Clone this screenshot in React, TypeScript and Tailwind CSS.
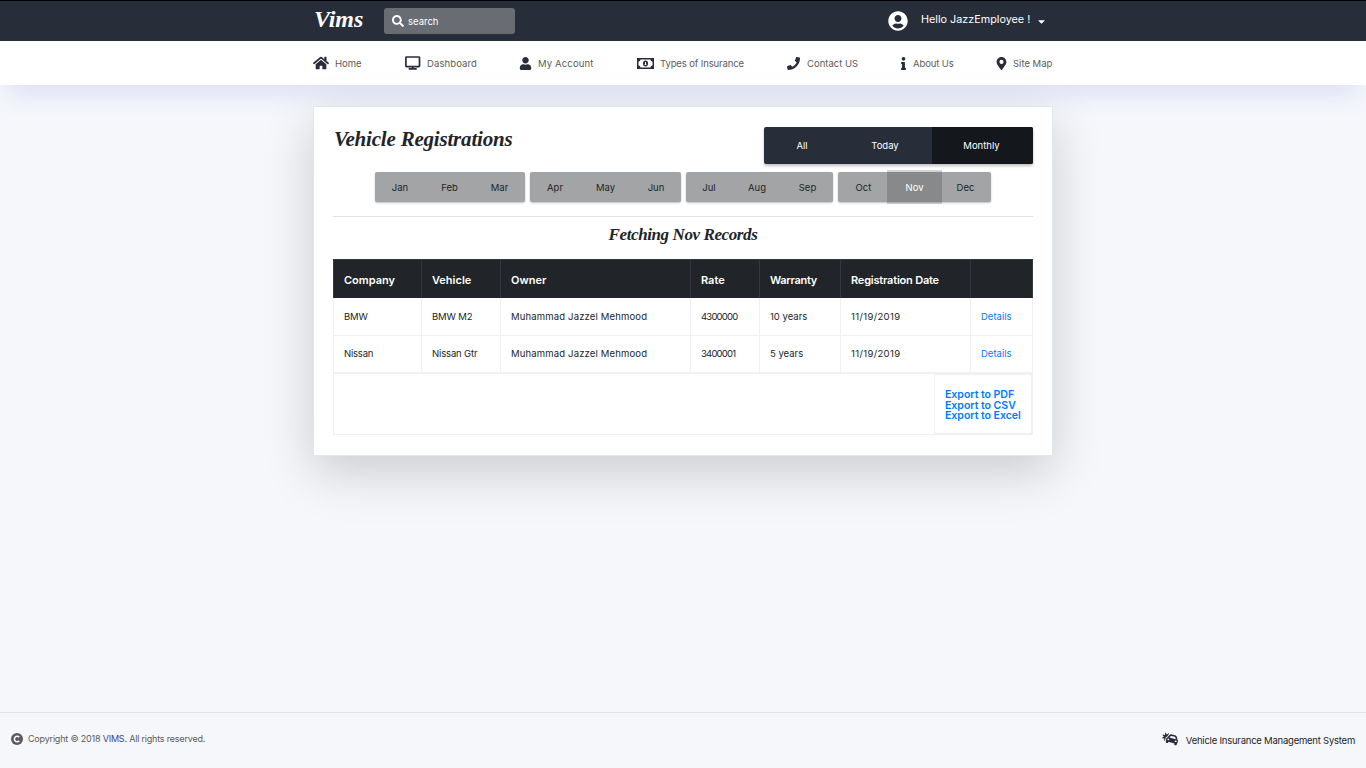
import React from "react";
import { FaHome, FaUser, FaPhone, FaInfo, FaMapMarkerAlt, FaUserCircle, FaSearch, FaCaretDown, FaCarCrash } from "react-icons/fa";

const Monitor = () => (
  <svg viewBox="0 0 16 14" className="w-4 h-3.5 shrink-0" fill="none" stroke="#282d3a" strokeWidth="1.7">
    <rect x="0.9" y="1" width="13.6" height="9.6" rx="0.6" />
    <path d="M7.7 10v2M3.7 12.9h8" />
  </svg>
);
const Money = () => (
  <svg viewBox="0 0 17 11" className="w-[17px] h-[11px] shrink-0">
    <path d="M0 0h17v11H0z" fill="#282d3a" />
    <path d="M3.5 1.5h10q0 2 2 2v4q-2 0-2 2h-10q0-2-2-2v-4q2 0 2-2z" fill="#fff" />
    <ellipse cx="8.5" cy="5.5" rx="2.5" ry="3" fill="#282d3a" />
    <path d="M8 4h1v2.5h.6v.6H7.4v-.6H8z" fill="#fff" />
  </svg>
);

type Item = { label: string; icon: React.ReactNode; cls: string; text: string };
const nav: Item[] = [
  { label: "Home", icon: <FaHome size={16} />, cls: "w-[92px] gap-[6px]", text: "" },
  { label: "Dashboard", icon: <Monitor />, cls: "w-[114px] gap-[6px]", text: "tracking-[0.1px]" },
  { label: "My Account", icon: <FaUser size={13} />, cls: "w-[118px] gap-[6px]", text: "tracking-[0.15px]" },
  { label: "Types of Insurance", icon: <Money />, cls: "w-[150px] gap-[6px]", text: "tracking-[-0.12px]" },
  { label: "Contact US", icon: <FaPhone size={13} />, cls: "w-[110px] gap-[7px]", text: "" },
  { label: "About Us", icon: <FaInfo size={13} />, cls: "w-[98px] gap-[3px]", text: "tracking-[-0.1px]" },
  { label: "Site Map", icon: <FaMapMarkerAlt size={13} />, cls: "gap-[5px]", text: "" },
];

const months: [string, string][][] = [
  [["Jan", "w-[50px]"], ["Feb", "w-[49px]"], ["Mar", "w-[51px]"]],
  [["Apr", "w-[50px]"], ["May", "w-[51px]"], ["Jun", "w-[50px]"]],
  [["Jul", "w-[46px]"], ["Aug", "w-[50px]"], ["Sep", "w-[51px]"]],
  [["Oct", "w-[51px]"], ["Nov", "w-[51px]"], ["Dec", "w-[51px]"]],
];
const heads = ["Company", "Vehicle", "Owner", "Rate", "Warranty", "Registration Date", ""];
const rows = [
  ["BMW", "BMW M2", "Muhammad Jazzel Mehmood", "4300000", "10 years", "11/19/2019", "Details"],
  ["Nissan", "Nissan Gtr", "Muhammad Jazzel Mehmood", "3400001", "5 years", "11/19/2019", "Details"],
];
const tracking = ["tracking-[-0.2px]", "tracking-[-0.15px]", "tracking-[0.16px]", "tracking-[-0.8px]", "", "tracking-[0.35px]", ""];
const cols = "grid grid-cols-[88px_79px_190px_69px_81px_130px_62px]";

export default function App() {
  return (
    <div className="h-[768px] w-full flex flex-col bg-[#f5f7fb] font-['Inter',sans-serif] text-[9.5px] text-[#212529] overflow-hidden">
      <header className="h-[41px] shrink-0 bg-[#282d3a] border-t border-black text-white">
        <div className="w-[738px] mx-auto h-full flex items-center">
          <span className="w-[70px] pb-1 font-['Liberation_Serif',serif] italic font-bold text-[24px] leading-6">Vims</span>
          <div className="w-[131px] h-[26px] rounded-[3px] bg-[#696d73] flex items-center gap-1 pl-2">
            <FaSearch size={12} />
            <span className="pt-0.5">search</span>
          </div>
          <div className="ml-auto pr-[5px] flex items-center">
            <FaUserCircle size={20} />
            <span className="ml-[13px] mr-[6px] w-[109px] pb-px text-[10.8px] whitespace-nowrap">Hello JazzEmployee !</span>
            <FaCaretDown size={11} />
          </div>
        </div>
      </header>
      <nav className="h-11 shrink-0 bg-white shadow-[0_16px_24px_-8px_rgba(120,115,220,0.2)]">
        <div className="w-[740px] mx-auto h-full flex items-center text-[#282d3a]">
          {nav.map((n) => (
            <a key={n.label} className={"flex items-center whitespace-nowrap shrink-0 " + n.cls}>
              {n.icon}
              <span className={"pt-0.5 text-[#5b5b5b] " + n.text}>{n.label}</span>
            </a>
          ))}
        </div>
      </nav>
      <main className="flex-1 pt-[21px]">
        <section className="w-[740px] h-[350px] mx-auto bg-white border border-[#e4e7ea] shadow-[0_16px_48px_rgba(0,0,0,0.175)] px-[19px] pt-5">
          <div className="flex justify-between h-[45px]">
            <h1 className="pl-px font-['Liberation_Serif',serif] italic font-bold text-[21px] leading-6 tracking-[-0.2px]">Vehicle Registrations</h1>
            <div className="flex h-[37px] rounded-[2px] overflow-hidden text-white bg-[#282d3a] shadow-[0_2px_3px_rgba(0,0,0,0.25)]">
              <span className="w-[76px] pt-0.5 grid place-items-center">All</span>
              <span className="w-[92px] pt-0.5 pr-0.5 grid place-items-center">Today</span>
              <span className="w-[101px] pt-0.5 pr-0.5 grid place-items-center bg-[#14171c]">Monthly</span>
            </div>
          </div>
          <div className="flex justify-center gap-[5px] h-[30px]">
            {months.map((g, i) => (
              <div key={i} className="flex rounded-[2px] bg-[#a2a4a5] shadow-[0_1px_2px_rgba(0,0,0,0.25)]">
                {g.map(([m, w]) => (
                  <span key={m} className={"pt-0.5 grid place-items-center " + w + (m === "Nov" ? " bg-[#88898a] text-white shadow-[0_0_0_2px_rgba(0,0,0,0.16)]" : "")}>{m}</span>
                ))}
              </div>
            ))}
          </div>
          <hr className="mt-3.5 border-[#e2e3e5]" />
          <h2 className="h-[42px] pt-1.5 text-center font-['Liberation_Serif',serif] italic font-bold text-[17px] leading-6 tracking-[-0.4px]">Fetching Nov Records</h2>
          <div className="w-[700px]">
            <div className={cols + " h-[39px] bg-[#212529] border-t border-l border-[#32383e] text-white text-[11px] font-semibold"}>
              {heads.map((h, i) => (
                <span key={i} className={"flex items-center pl-2.5 pt-[3px] border-r border-[#32383e] whitespace-nowrap " + (i === 5 ? "tracking-[-0.2px]" : i === 4 ? "tracking-[-0.3px]" : "")}>{h}</span>
              ))}
            </div>
            {rows.map((r, y) => (
              <div key={y} className={cols + " border-l border-[#f1f1f2] " + (y === 0 ? "h-[38px]" : "h-[37px]")}>
                {r.map((c, i) => (
                  <span key={i} className={"flex items-center pl-2.5 pt-px border-r border-b border-[#f1f1f2] whitespace-nowrap " + tracking[i] + (i === 6 ? " text-[#007bff]" : "")}>{c}</span>
                ))}
              </div>
            ))}
            <div className="h-[62px] border border-[#f1f1f2] flex justify-end">
              <div className="w-[98px] border border-[#f1f1f2] pl-2.5 pt-[15px] text-[#007bff] font-semibold text-[10.6px] leading-[10.5px] tracking-[-0.05px] whitespace-nowrap">
                <div>Export to PDF</div>
                <div>Export to CSV</div>
                <div>Export to Excel</div>
              </div>
            </div>
          </div>
        </section>
      </main>
      <footer className="h-14 shrink-0 border-t border-[#e2e3e8] flex items-center justify-between px-[11px] pb-1">
        <div className="flex items-center gap-[5px] text-[#5b5b5b] whitespace-nowrap">
          <svg viewBox="0 0 12 12" className="w-3 h-3">
            <circle cx="6" cy="6" r="6" fill="#5b5b5b" />
            <path d="M8.2 4.3a2.7 2.7 0 1 0 0 3.4" fill="none" stroke="#fff" strokeWidth="1.5" />
          </svg>
          <span className="text-[9px] tracking-[-0.2px]">Copyright © 2018 <span className="text-[#46428c]">VIMS.</span> All rights reserved.</span>
        </div>
        <div className="flex items-center gap-2 whitespace-nowrap">
          <FaCarCrash size={16} color="#282d3a" />
          <span className="pt-1.5 tracking-[-0.23px]">Vehicle Insurance Management System</span>
        </div>
      </footer>
    </div>
  );
}
